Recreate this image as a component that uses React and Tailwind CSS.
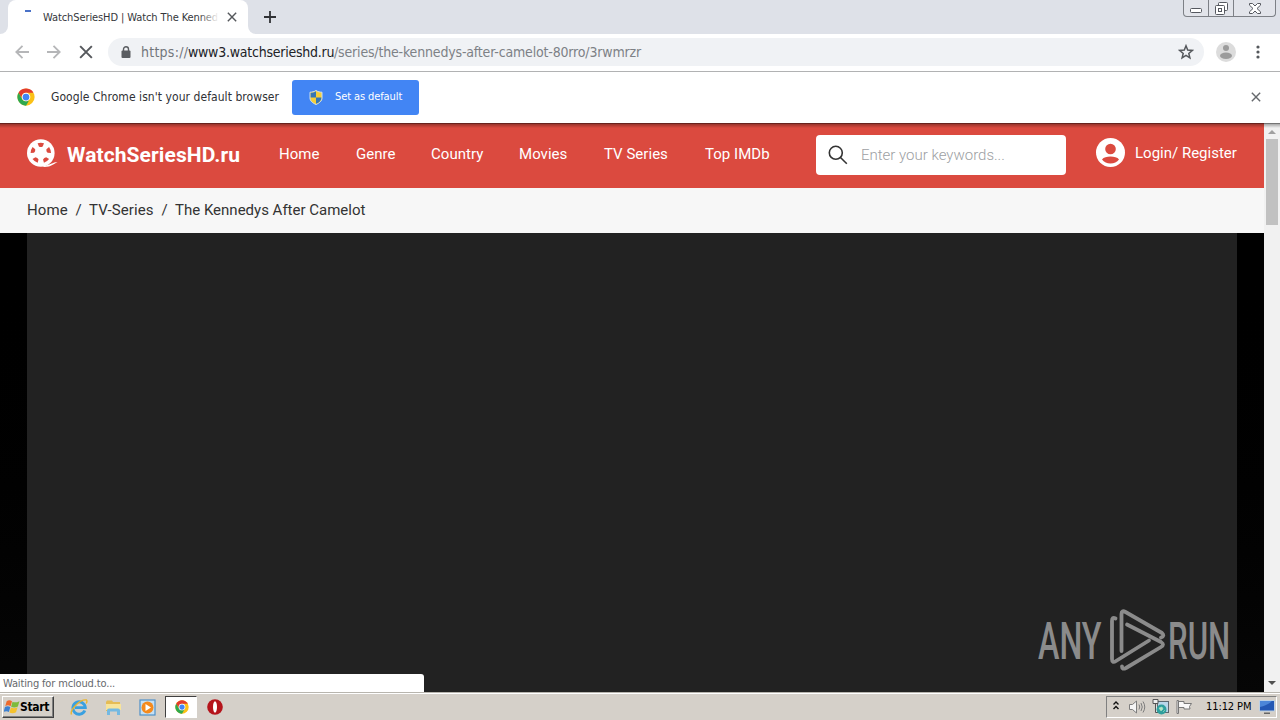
const navItems = [
  { label: "Home", className: "ml-[39px] w-[41px]" },
  { label: "Genre", className: "ml-9 w-[39px]" },
  { label: "Country", className: "ml-9 w-[52px]" },
  { label: "Movies", className: "ml-9 w-[49px]" },
  { label: "TV Series", className: "ml-9 w-[65px]" },
  { label: "Top IMDb", className: "ml-9 w-[65px]" },
]

const ChromeLogo = ({ className }) => (
  <svg className={className} viewBox="0 0 48 48">
    <circle cx="24" cy="24" r="23" fill="#fbc116" />
    <path d="M4.1 12.5A23 23 0 0 1 43.9 12.5H24A11.5 11.5 0 0 0 14 29.7Z" fill="#e33b2e" />
    <path d="M4.1 12.5A23 23 0 0 0 24 47L34 29.7A11.5 11.5 0 0 1 14 29.7Z" fill="#2da94f" />
    <circle cx="24" cy="24" r="11.5" fill="#fff" />
    <circle cx="24" cy="24" r="9" fill="#4285f4" />
  </svg>
)

const CloseIcon = ({ className }) => (
  <svg className={className} viewBox="0 0 12 12" fill="none" stroke="currentColor" strokeWidth="1.7">
    <path d="M1 1l10 10M11 1l-10 10" />
  </svg>
)

const TabStrip = () => (
  <div className="flex h-[34px] bg-[#dee1e8]">
    <div className="h-full w-2 bg-white">
      <div className="h-full rounded-br-lg bg-[#dee1e8]" />
    </div>
    <div className="flex h-full w-[240px] rounded-t-lg bg-white">
      <div className="ml-[17px] mt-[10px] h-[2px] w-[6px] bg-[#4a72c8]" />
      <div className="relative ml-3 mt-[10px] h-[15px] w-[176px] overflow-hidden text-[11px] leading-[15px] tracking-[-0.1px] whitespace-nowrap text-[#35373b]">
        WatchSeriesHD | Watch The Kenned
        <div className="absolute top-0 right-0 h-full w-5 bg-linear-to-r from-transparent to-white" />
      </div>
      <CloseIcon className="mt-3 ml-2 h-[10px] w-[10px] text-[#55585c]" />
    </div>
    <div className="h-full w-2 bg-white">
      <div className="h-full rounded-bl-lg bg-[#dee1e8]" />
    </div>
    <svg className="mt-[11px] ml-2 h-3 w-3" viewBox="0 0 12 12" stroke="#303236" strokeWidth="1.8">
      <path d="M6 0v12M0 6h12" />
    </svg>
    <div className="mr-1 ml-auto flex h-[17px] w-[93px] rounded-b-[4px] border border-t-0 border-[#7d8086] bg-[#e2e4ea]">
      <div className="flex w-[25px] justify-center border-r border-[#7d8086]">
        <svg className="mt-[8px] h-[6px] w-3" viewBox="0 0 12 6">
          <rect x=".5" y=".5" width="11" height="4" rx="1" fill="#fff" stroke="#55585f" />
        </svg>
      </div>
      <div className="flex w-[25px] justify-center border-r border-[#7d8086]">
        <svg className="mt-[2px] h-[13px] w-[13px]" viewBox="0 0 13 13" fill="#fff" stroke="#55585f">
          <rect x="3.5" y=".5" width="9" height="8" rx="1" />
          <rect x=".5" y="3.5" width="9" height="9" rx="1" />
          <rect x="3.5" y="6.5" width="3" height="3" />
        </svg>
      </div>
      <div className="flex flex-1 justify-center">
        <svg className="mt-[3px] h-[11px] w-3" viewBox="0 0 12 11">
          <path d="M.5.5h3L6 3 8.500.5h3v1.700L8 5.500l3.500 3.300v1.700h-3L6 8l-2.500 2.500h-3V8.800L4 5.500.500 2.200z" fill="#fff" stroke="#55585f" />
        </svg>
      </div>
    </div>
  </div>
)

const Toolbar = () => (
  <div className="flex h-[38px] items-center border-b border-[#b1b2b3] bg-white pb-[2px]">
    <svg className="ml-[15px] h-[14px] w-[14px]" viewBox="0 0 14 14" fill="none" stroke="#b5b6b8" strokeWidth="1.8">
      <path d="M14 7H1.500M7.500 .8L1.300 7l6.200 6.200" />
    </svg>
    <svg className="ml-[18px] h-[14px] w-[14px]" viewBox="0 0 14 14" fill="none" stroke="#b5b6b8" strokeWidth="1.8">
      <path d="M0 7h12.500M6.500 .8L12.700 7l-6.200 6.200" />
    </svg>
    <CloseIcon className="ml-[18px] h-[14px] w-[14px] text-[#55585c]" />
    <div className="ml-[15px] flex h-7 w-[1096px] items-center rounded-full bg-[#f0f2f5] text-sm">
      <svg className="ml-[13px] h-3 w-[10px]" viewBox="0 0 10 12">
        <path d="M2.500 5V3.300a2.500 2.500 0 0 1 5 0V5" fill="none" stroke="#5a5d61" strokeWidth="1.400" />
        <rect x=".5" y="4.500" width="9" height="7.500" rx="1" fill="#5a5d61" />
      </svg>
      <span className="ml-[10px] w-[47px] tracking-[0.25px] whitespace-nowrap text-[#72767b]">https://</span>
      <span className="w-[146px] tracking-[-0.24px] whitespace-nowrap text-[#202226]">www3.watchserieshd.ru</span>
      <span className="tracking-[-0.17px] whitespace-nowrap text-[#7d8186]">/series/the-kennedys-after-camelot-80rro/3rwmrzr</span>
      <svg className="mr-[10px] ml-auto h-4 w-4" viewBox="0 0 16 16" fill="none" stroke="#55585c" strokeWidth="1.5">
        <path d="M8 1.800l1.700 4.300 4.600.3-3.500 3 1.100 4.500L8 11.400l-3.900 2.500 1.100-4.500-3.500-3 4.600-.3z" />
      </svg>
    </div>
    <svg className="ml-3 h-5 w-5" viewBox="0 0 20 20">
      <circle cx="10" cy="10" r="10" fill="#dcdcdc" />
      <circle cx="10" cy="6" r="3" fill="#9b9b9b" />
      <ellipse cx="10" cy="13.700" rx="6" ry="3.200" fill="#9b9b9b" />
    </svg>
    <svg className="ml-[20px] h-[14px] w-[4px]" viewBox="0 0 4 14" fill="#55585c">
      <circle cx="2" cy="2" r="1.600" />
      <circle cx="2" cy="7" r="1.600" />
      <circle cx="2" cy="12" r="1.600" />
    </svg>
  </div>
)

const InfoBar = () => (
  <div className="flex h-[51px] items-center bg-white pb-px">
    <ChromeLogo className="ml-[17px] h-[18px] w-[18px]" />
    <span className="mb-px ml-4 w-[241px] text-xs tracking-[0.06px] whitespace-nowrap text-[#2f3135]">
      Google Chrome isn't your default browser
    </span>
    <div className="flex h-[35px] w-[127px] items-center rounded-[3px] bg-[#4285f4]">
      <svg className="ml-[17px] h-[15px] w-[14px]" viewBox="0 0 14 15">
        <path d="M7 .5C5 1.800 3 2.200 1 2.200V8c0 3 2.500 5 6 6.500C10.500 13 13 11 13 8V2.200C11 2.200 9 1.800 7 .5z" fill="#f5cf3a" stroke="#cfe0ee" />
        <path d="M7 1.200C5.300 2.400 3.500 2.800 1.600 2.800v4.700H7zM7 7.500h5.400c0 3-2 5-5.400 6.300z" fill="#3576b5" />
      </svg>
      <span className="mt-px ml-3 text-[11px] tracking-[-0.1px] whitespace-nowrap text-white">Set as default</span>
    </div>
    <CloseIcon className="mr-[19px] ml-auto h-[10px] w-[10px] text-[#66696d]" />
  </div>
)

const holeAngles = [0, 72, 144, 216, 288]

const ReelLogo = () => (
  <svg className="ml-[27px] h-[30px] w-[31px]" viewBox="0 0 31 30">
    <circle cx="13.800" cy="14" r="13.800" fill="#fff" />
    <path d="M14 26.300c7 1.500 12-3.500 16.500-3.300-3.500 1.500-6 5-13 5z" fill="#fff" />
    {holeAngles.map((angle) => (
      <path
        key={angle}
        d="M10.600 4.300q3.200-1 6.400 0l-1.300 3.200q-1.900 1.100-3.800 0z"
        transform={`rotate(${angle} 13.800 14)`}
        fill="#db4a3f"
      />
    ))}
  </svg>
)

const SiteHeader = () => (
  <div className="flex h-[65px] items-center bg-[#db4a3f] pb-[3px] text-[15px] text-white">
    <ReelLogo />
    <span className="mt-[3px] ml-[9px] w-[173px] text-[21px] font-bold tracking-[0.1px] whitespace-nowrap">WatchSeriesHD.ru</span>
    {navItems.map((item) => (
      <span key={item.label} className={`${item.className} tracking-[0.03px] whitespace-nowrap`}>
        {item.label}
      </span>
    ))}
    <div className="mt-[2px] ml-[46px] flex h-10 w-[250px] items-center rounded bg-white">
      <svg className="ml-3 h-5 w-5" viewBox="0 0 20 20" fill="none" stroke="#333" strokeWidth="1.600">
        <circle cx="7.800" cy="7.800" r="6.500" />
        <path d="M12.500 12.500l6.300 6.300" />
      </svg>
      <span className="ml-[13px] font-light text-[#9da0a3]">Enter your keywords...</span>
    </div>
    <svg className="mb-[3px] ml-[30px] h-[29px] w-[29px]" viewBox="0 0 29 29">
      <circle cx="14.500" cy="14.500" r="14.500" fill="#fff" />
      <circle cx="14.500" cy="11" r="5.300" fill="#db4a3f" />
      <path d="M6 21.500c1.500-2.300 5-3 8.500-3s7 .7 8.500 3c-2 2.700-5 4-8.500 4s-6.500-1.300-8.500-4z" fill="#db4a3f" />
    </svg>
    <span className="mb-[2px] ml-[10px] whitespace-nowrap">Login/ Register</span>
  </div>
)

const Breadcrumb = () => (
  <div className="flex h-[45px] items-center bg-[#f7f7f7] pl-[27px] text-[15px] whitespace-nowrap text-[#333]">
    <span className="w-[41px] tracking-[0.1px]">Home</span>
    <span className="w-[21px] text-center">/</span>
    <span className="w-[65px] tracking-[0.1px]">TV-Series</span>
    <span className="w-[21px] text-center">/</span>
    <span>The Kennedys After Camelot</span>
  </div>
)

const Watermark = () => (
  <div className="absolute top-[486px] left-[1038px] flex h-[64px] w-[195px] items-center text-[52px] leading-none text-[#8b8b8b]">
    <span className="mt-[2px] w-[64px] origin-left scale-x-[0.62] font-medium whitespace-nowrap">ANY</span>
    <svg className="ml-[7px] h-[64px] w-[58px]" viewBox="0 0 58 64" fill="none" stroke="currentColor" strokeWidth="3.800" strokeLinecap="round" strokeLinejoin="round">
      <path d="M6.500 9.500Q3 7.500 3 12V50Q3 54.500 7 52L40 31.500" />
      <path d="M12.500 42V5Q12.500 .8 16.500 3L53 24Q56 27 52 28.500" />
      <path d="M18 15.500L52 33Q56 35.500 52 38L17 59Q13 61 13 57.500" />
    </svg>
    <span className="mt-[2px] ml-[1px] w-[62px] origin-left scale-x-[0.6] font-medium whitespace-nowrap">RUN</span>
  </div>
)

const Scrollbar = () => (
  <div className="flex w-4 flex-col items-center bg-[#f1f1f1]">
    <svg className="mt-[7px] h-1 w-2" viewBox="0 0 8 4">
      <path d="M4 0l4 4H0z" fill="#a0a0a0" />
    </svg>
    <div className="mt-[5px] h-[86px] w-3 bg-[#c1c1c1]" />
    <svg className="mt-auto mb-[7px] h-1 w-2" viewBox="0 0 8 4">
      <path d="M0 0h8L4 4z" fill="#505050" />
    </svg>
  </div>
)

const Taskbar = () => (
  <div className="flex h-7 border-t border-[#b8b5ae] bg-[#d5d0c9] font-['DejaVu_Sans_Condensed',sans-serif]">
    <div className="flex w-full items-center border-t border-white">
      <div className="ml-[2px] flex h-[22px] w-[52px] items-center border border-t-white border-r-[#404040] border-b-[#404040] border-l-white bg-[#d5d0c9] shadow-[inset_-1px_-1px_0_#808080]">
        <svg className="mb-px ml-px h-4 w-4" viewBox="1 1.500 15 13">
          <path d="M3.500 2.500q2.500-1.500 5 0L7.200 7.200q-2.500-1.500-5 0z" fill="#ee6a2c" />
          <path d="M9 3q2.500 1.500 6.500-.5L14 7.500q-3.300 1.800-6.300.3z" fill="#7dbb3c" />
          <path d="M1.900 8q2.500-1.500 5 0L5.600 12.700q-2.500-1.500-5 0z" fill="#3d80d0" />
          <path d="M7.500 8.500q3 1.500 6.200-.2L12.300 13q-3.300 1.800-6.200.2z" fill="#f5c22e" />
        </svg>
        <span className="text-xs font-bold tracking-[-0.3px] text-black">Start</span>
      </div>
      <svg className="ml-4 h-[18px] w-[18px]" viewBox="0 0 18 18" fill="none">
        <path d="M14.800 12.500A6.200 6.200 0 1 1 15.300 9.600H5" stroke="#39a0e0" strokeWidth="2.900" />
        <path d="M1.500 16.500C-.5 12 10 1 16.500 2q1 1-.3 3.500" stroke="#eab52e" strokeWidth="1.400" />
      </svg>
      <svg className="ml-[17px] h-[17px] w-[17px]" viewBox="0 0 17 17">
        <path d="M1 3l1-1.500h5L8 3h7v9H1z" fill="#e5bc55" />
        <path d="M1 5h15v6H1z" fill="#f8e49a" />
        <path d="M2 16v-4.500Q2 9.500 4 9.500h9q2 0 2 2V16h-3v-3.500H5V16z" fill="#74b9e2" />
      </svg>
      <svg className="ml-[17px] h-[17px] w-[17px]" viewBox="0 0 17 17">
        <rect x="1" y="1" width="15" height="15" fill="#c6e0f4" stroke="#4f91c9" strokeWidth="1.200" />
        <circle cx="8.500" cy="8.500" r="6" fill="#f58a1d" />
        <path d="M6.500 5l5.500 3.500-5.500 3.500z" fill="#fff" />
      </svg>
      <div className="ml-[9px] flex h-[22px] w-8 items-center justify-center border border-t-[#404040] border-r-white border-b-white border-l-[#404040] bg-white">
        <ChromeLogo className="ml-px h-[14px] w-[14px]" />
      </div>
      <svg className="ml-[10px] h-4 w-4" viewBox="0 0 16 16">
        <circle cx="8" cy="8" r="7.800" fill="#b5141b" />
        <ellipse cx="8" cy="8" rx="2" ry="5.700" fill="#fff" />
      </svg>
      <div className="mr-[3px] ml-auto flex h-[22px] w-[171px] items-center border border-t-[#808080] border-r-white border-b-white border-l-[#808080]">
        <svg className="mb-1 ml-[6px] h-[9px] w-[6px]" viewBox="0 0 6 9" fill="none" stroke="#111" strokeWidth="1.400">
          <path d="M.5 3.500L3 1l2.500 2.500M.5 8L3 5.500 5.500 8" />
        </svg>
        <svg className="ml-[10px] h-4 w-[17px]" viewBox="0 0 17 16" fill="none" stroke="#7d7d7d">
          <path d="M.5 5.500h3L7.500 2v12l-4-3.500h-3z" fill="#f5f5f5" />
          <path d="M10 5.500q1.500 2.500 0 5M12 4q2.500 4 0 8M14 2.500q3.500 5.500 0 11" />
        </svg>
        <svg className="ml-[6px] h-4 w-[17px]" viewBox="0 0 17 16">
          <rect x="5.500" y="2.500" width="11" height="11" fill="#b9d7ea" stroke="#5c6870" />
          <path d="M1 .5h5v4H1zM3.500 4.500v9H7" fill="#eee" stroke="#555" />
          <circle cx="9.500" cy="10.500" r="5" fill="#2f9f9d" />
          <path d="M7 9l3-1 1 2-2 2zM11 13l2-2" fill="#b4e4c4" stroke="#b4e4c4" strokeWidth=".6" />
        </svg>
        <svg className="ml-[7px] h-4 w-[17px]" viewBox="0 0 17 16" fill="#f8f8f8" stroke="#777">
          <path d="M2.500 2.500h5.500v2h7.500l-2 3 .500 2.500H8V8.500H2.500z" />
          <path d="M1 1.500h1.500v13H1z" />
        </svg>
        <span className="ml-[13px] w-[45px] text-[11px] tracking-[-0.1px] whitespace-nowrap text-black">11:12 PM</span>
        <svg className="ml-[8px] h-[14px] w-4" viewBox="0 0 16 14">
          <rect width="16" height="11.500" rx="1" fill="#bcd0e4" />
          <rect x="1" y="1" width="14" height="9.500" fill="#2458b4" />
          <path d="M1 1h12Q9 5 1 7z" fill="#4c86d8" />
          <path d="M5 12.500h6v1.500H5z" fill="#666" />
        </svg>
      </div>
    </div>
  </div>
)

export default function App() {
  return (
    <div className="flex h-[720px] w-[1280px] flex-col overflow-hidden bg-white">
      <div className="font-['DejaVu_Sans_Condensed',sans-serif]">
        <TabStrip />
        <Toolbar />
        <InfoBar />
      </div>
      <div className="relative flex h-[569px] font-['Roboto',sans-serif]">
        <div className="flex flex-1 flex-col">
          <SiteHeader />
          <Breadcrumb />
          <div className="flex-1 bg-linear-to-b from-black to-[#060606] px-[27px]">
            <div className="h-full bg-[#222]" />
          </div>
        </div>
        <Scrollbar />
        <div className="absolute top-0 left-0 h-[5px] w-full border-t border-black/50 bg-linear-to-b from-black/30 to-transparent" />
        <Watermark />
        <div className="absolute bottom-0 left-0 h-[18px] w-[424px] rounded-tr-[3px] bg-white pl-[3px] font-['DejaVu_Sans_Condensed',sans-serif] text-[11px] leading-[19px] tracking-[-0.15px] text-[#66696d]">
          Waiting for mcloud.to...
        </div>
      </div>
      <Taskbar />
    </div>
  )
}
